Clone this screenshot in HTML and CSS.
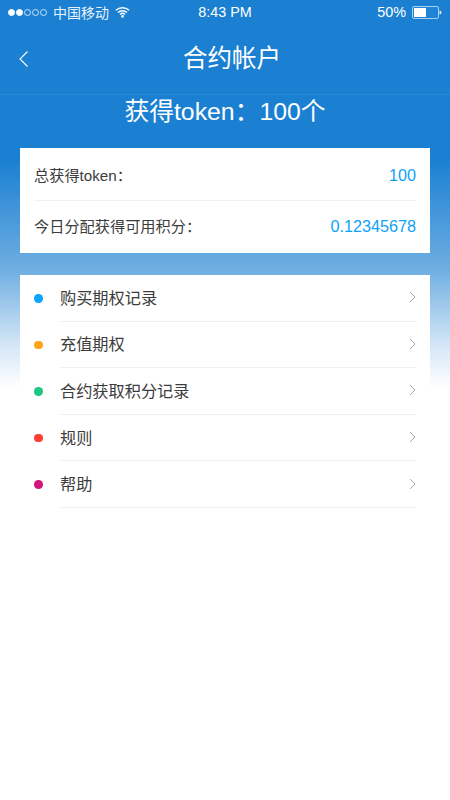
FILE: index.html
```html
<!DOCTYPE html>
<html lang="zh-CN">
<head>
<meta charset="utf-8">
<title>合约帐户</title>
<link rel="stylesheet" href="styles.css">
</head>
<body>
<div class="page">
  <header class="header">
    <div class="status">
      <div class="status-left">
        <span class="signal"><i class="on"></i><i class="on"></i><i></i><i></i><i></i></span>
        <span class="carrier">中国移动</span>
        <svg class="wifi" width="15" height="12" viewBox="0 0 16 12"><path d="M1 4.2a10 10 0 0 1 14 0M3.2 6.5a7 7 0 0 1 9.6 0M5.4 8.6a3.8 3.8 0 0 1 5.2 0" fill="none" stroke="#fff" stroke-width="1.6"/><circle cx="8" cy="10.6" r="1.4" fill="#fff"/></svg>
      </div>
      <span class="time">8:43 PM</span>
      <div class="status-right">
        <span>50%</span>
        <svg width="30" height="13" viewBox="0 0 30 13"><rect x="0.5" y="0.5" width="26" height="12" rx="1.5" fill="#1f84d5" stroke="#a9d0ef"/><rect x="2" y="2" width="12" height="9" fill="#fff"/><path d="M27.5 4.5a2 2 0 0 1 0 4z" fill="#d4e7f7"/></svg>
      </div>
    </div>
    <div class="nav">
      <svg class="back" width="11" height="18" viewBox="0 0 11 18"><path d="M9.5 1.5 2 9l7.5 7.5" fill="none" stroke="#fff" stroke-width="1.1"/></svg>
      <h1 class="title">合约帐户</h1>
    </div>
  </header>
  <main class="content">
    <h2 class="summary">获得token：100个</h2>
    <section class="card stats">
      <div class="stat"><span>总获得token：</span><b>100</b></div>
      <div class="stat"><span>今日分配获得可用积分：</span><b>0.12345678</b></div>
    </section>
    <section class="card menu">
      <div class="item"><i class="dot blue"></i><div class="item-body"><span>购买期权记录</span><svg class="chev" width="7" height="12" viewBox="0 0 7 12"><path d="M1 1l5 5-5 5" fill="none" stroke="#a8a8a8"/></svg></div></div>
      <div class="item"><i class="dot orange"></i><div class="item-body"><span>充值期权</span><svg class="chev" width="7" height="12" viewBox="0 0 7 12"><path d="M1 1l5 5-5 5" fill="none" stroke="#a8a8a8"/></svg></div></div>
      <div class="item"><i class="dot green"></i><div class="item-body"><span>合约获取积分记录</span><svg class="chev" width="7" height="12" viewBox="0 0 7 12"><path d="M1 1l5 5-5 5" fill="none" stroke="#a8a8a8"/></svg></div></div>
      <div class="item"><i class="dot red"></i><div class="item-body"><span>规则</span><svg class="chev" width="7" height="12" viewBox="0 0 7 12"><path d="M1 1l5 5-5 5" fill="none" stroke="#a8a8a8"/></svg></div></div>
      <div class="item"><i class="dot pink"></i><div class="item-body"><span>帮助</span><svg class="chev" width="7" height="12" viewBox="0 0 7 12"><path d="M1 1l5 5-5 5" fill="none" stroke="#a8a8a8"/></svg></div></div>
    </section>
  </main>
</div>
</body>
</html>
```
FILE: styles.css
```css
* { box-sizing: border-box; }
html, body { margin: 0; padding: 0; }
body {
  width: 450px;
  height: 800px;
  overflow: hidden;
  font-family: "Liberation Sans", "Noto Sans CJK SC", sans-serif;
  background: #fff;
}
.page {
  height: 800px;
  background: linear-gradient(to bottom, #1b80d1 0, #1b80d1 160px, #6fafe2 270px, #d4e6f6 345px, #fff 388px);
}
.header { height: 95px; border-bottom: 1px solid #2a89d5; color: #fff; }
.status {
  height: 24px;
  padding: 0 8px;
  display: grid;
  grid-template-columns: 1fr auto 1fr;
  align-items: center;
  font-size: 14px;
}
.status-left { display: flex; align-items: center; }
.signal { display: flex; gap: 1px; margin-right: 6px; }
.signal i { width: 7px; height: 7px; border-radius: 50%; border: 1px solid #cfe3f5; }
.signal i.on { background: #fff; border-color: #fff; }
.carrier { font-size: 14px; margin-right: 6px; color: #e6f1fb; }
.wifi { display: block; }
.time { font-size: 14.4px; }
.status-right { display: flex; justify-content: flex-end; align-items: center; gap: 6px; }
.status-right span { font-size: 14.4px; }
.status-right svg { display: block; }
.nav { position: relative; height: 70px; display: flex; align-items: center; justify-content: center; padding-left: 14px; }
.back { position: absolute; left: 18px; top: 26px; }
.title { margin: 0; font-size: 24.5px; font-weight: 400; line-height: 68px; }
.content { padding: 0 20px; }
.summary {
  margin: 0;
  height: 53px;
  line-height: 33px;
  text-align: center;
  font-size: 24.8px;
  font-weight: 400;
  color: #fff;
}
.card { background: #fff; }
.stats { padding: 0 14px; height: 105px; margin-bottom: 22px; }
.stat {
  height: 52px;
  padding-top: 17px;
  display: flex;
  justify-content: space-between;
  align-items: baseline;
  font-size: 15.2px;
  line-height: 20px;
  color: #3c3c3c;
}
.stat + .stat { height: 53px; padding-top: 15px; border-top: 1px solid #f1f1f1; }
.stat b { font-size: 16.2px; font-weight: 400; color: #0ea2f5; }
.menu { padding: 0 14px; }
.item { height: 46.6px; display: flex; align-items: center; }
.dot { flex: none; width: 8.5px; height: 8.5px; border-radius: 50%; margin-right: 17.5px; }
.blue { background: #0ea4fb; }
.orange { background: #fda51a; }
.green { background: #1cc784; }
.red { background: #fb3f35; }
.pink { background: #d4147c; }
.item-body {
  flex: 1;
  height: 100%;
  display: flex;
  align-items: center;
  justify-content: space-between;
  padding-bottom: 2px;
  border-bottom: 1px solid #f1f1f1;
  font-size: 16.2px;
  color: #3c3c3c;
}
.chev { display: block; margin-top: 1px; }
```
